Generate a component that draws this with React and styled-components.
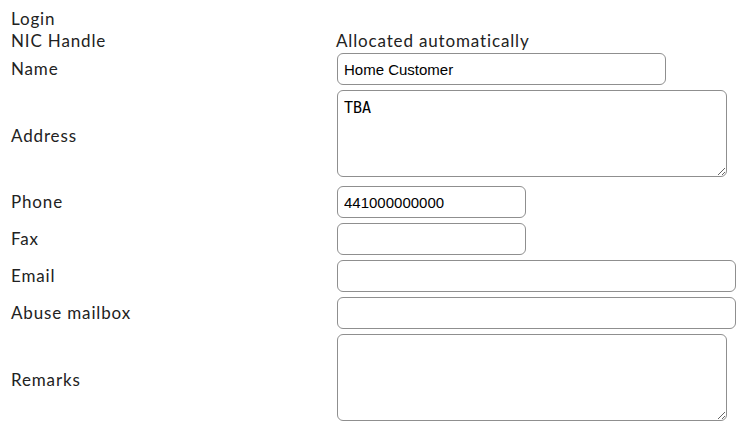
import React from 'react';
import styled, { createGlobalStyle } from 'styled-components';

const GlobalStyle = createGlobalStyle`
  body {
    margin: 0;
    background: #fff;
    font-family: Lato, "Open Sans", sans-serif;
    color: #222;
  }
`;

// Form layout
const Form = styled.div`
  display: flex;
  flex-direction: column;
  padding: 9px 0 0 11px;
`;

const Row = styled.div`
  display: grid;
  grid-template-columns: 326px auto;
  align-items: center;
  margin-top: ${(p) => p.$gap || 0}px;
`;

const Label = styled.div`
  font-size: 17px;
  line-height: 20px;
  letter-spacing: 0.85px;
  padding-top: ${(p) => p.$drop || 0}px;
`;

const Value = styled.div`
  font-size: 17px;
  line-height: 20px;
  letter-spacing: 0.85px;
  margin-left: -1px;
`;

const Input = styled.input`
  box-sizing: border-box;
  width: ${(p) => p.$width}px;
  height: 32px;
  padding: 0 6px;
  border: 1px solid #8f8f8f;
  border-radius: 6px;
  font-family: Arial, "Liberation Sans", sans-serif;
  font-size: 15px;
  color: #000;
  display: block;
`;

const TextArea = styled.textarea`
  box-sizing: border-box;
  width: 390px;
  height: ${(p) => p.$height}px;
  padding: 8px 6px;
  border: 1px solid #8f8f8f;
  border-radius: 6px;
  font-family: "DejaVu Sans Mono", monospace;
  font-size: 15px;
  color: #000;
  display: block;
  resize: vertical;
`;

const App = () => (
  <>
    <GlobalStyle />
    <Form>
      <Row>
        <Label>Login</Label>
        <Value />
      </Row>
      <Row $gap={2}>
        <Label>NIC Handle</Label>
        <Value>Allocated automatically</Value>
      </Row>
      <Row $gap={2}>
        <Label>Name</Label>
        <Input $width={329} defaultValue="Home Customer" />
      </Row>
      <Row $gap={5}>
        <Label $drop={5}>Address</Label>
        <TextArea $height={87} defaultValue="TBA" />
      </Row>
      <Row $gap={9}>
        <Label>Phone</Label>
        <Input $width={189} defaultValue="441000000000" />
      </Row>
      <Row $gap={5}>
        <Label>Fax</Label>
        <Input $width={189} />
      </Row>
      <Row $gap={5}>
        <Label>Email</Label>
        <Input $width={399} />
      </Row>
      <Row $gap={5}>
        <Label>Abuse mailbox</Label>
        <Input $width={399} />
      </Row>
      <Row $gap={5}>
        <Label $drop={4}>Remarks</Label>
        <TextArea $height={87} />
      </Row>
    </Form>
  </>
);

export default App;
